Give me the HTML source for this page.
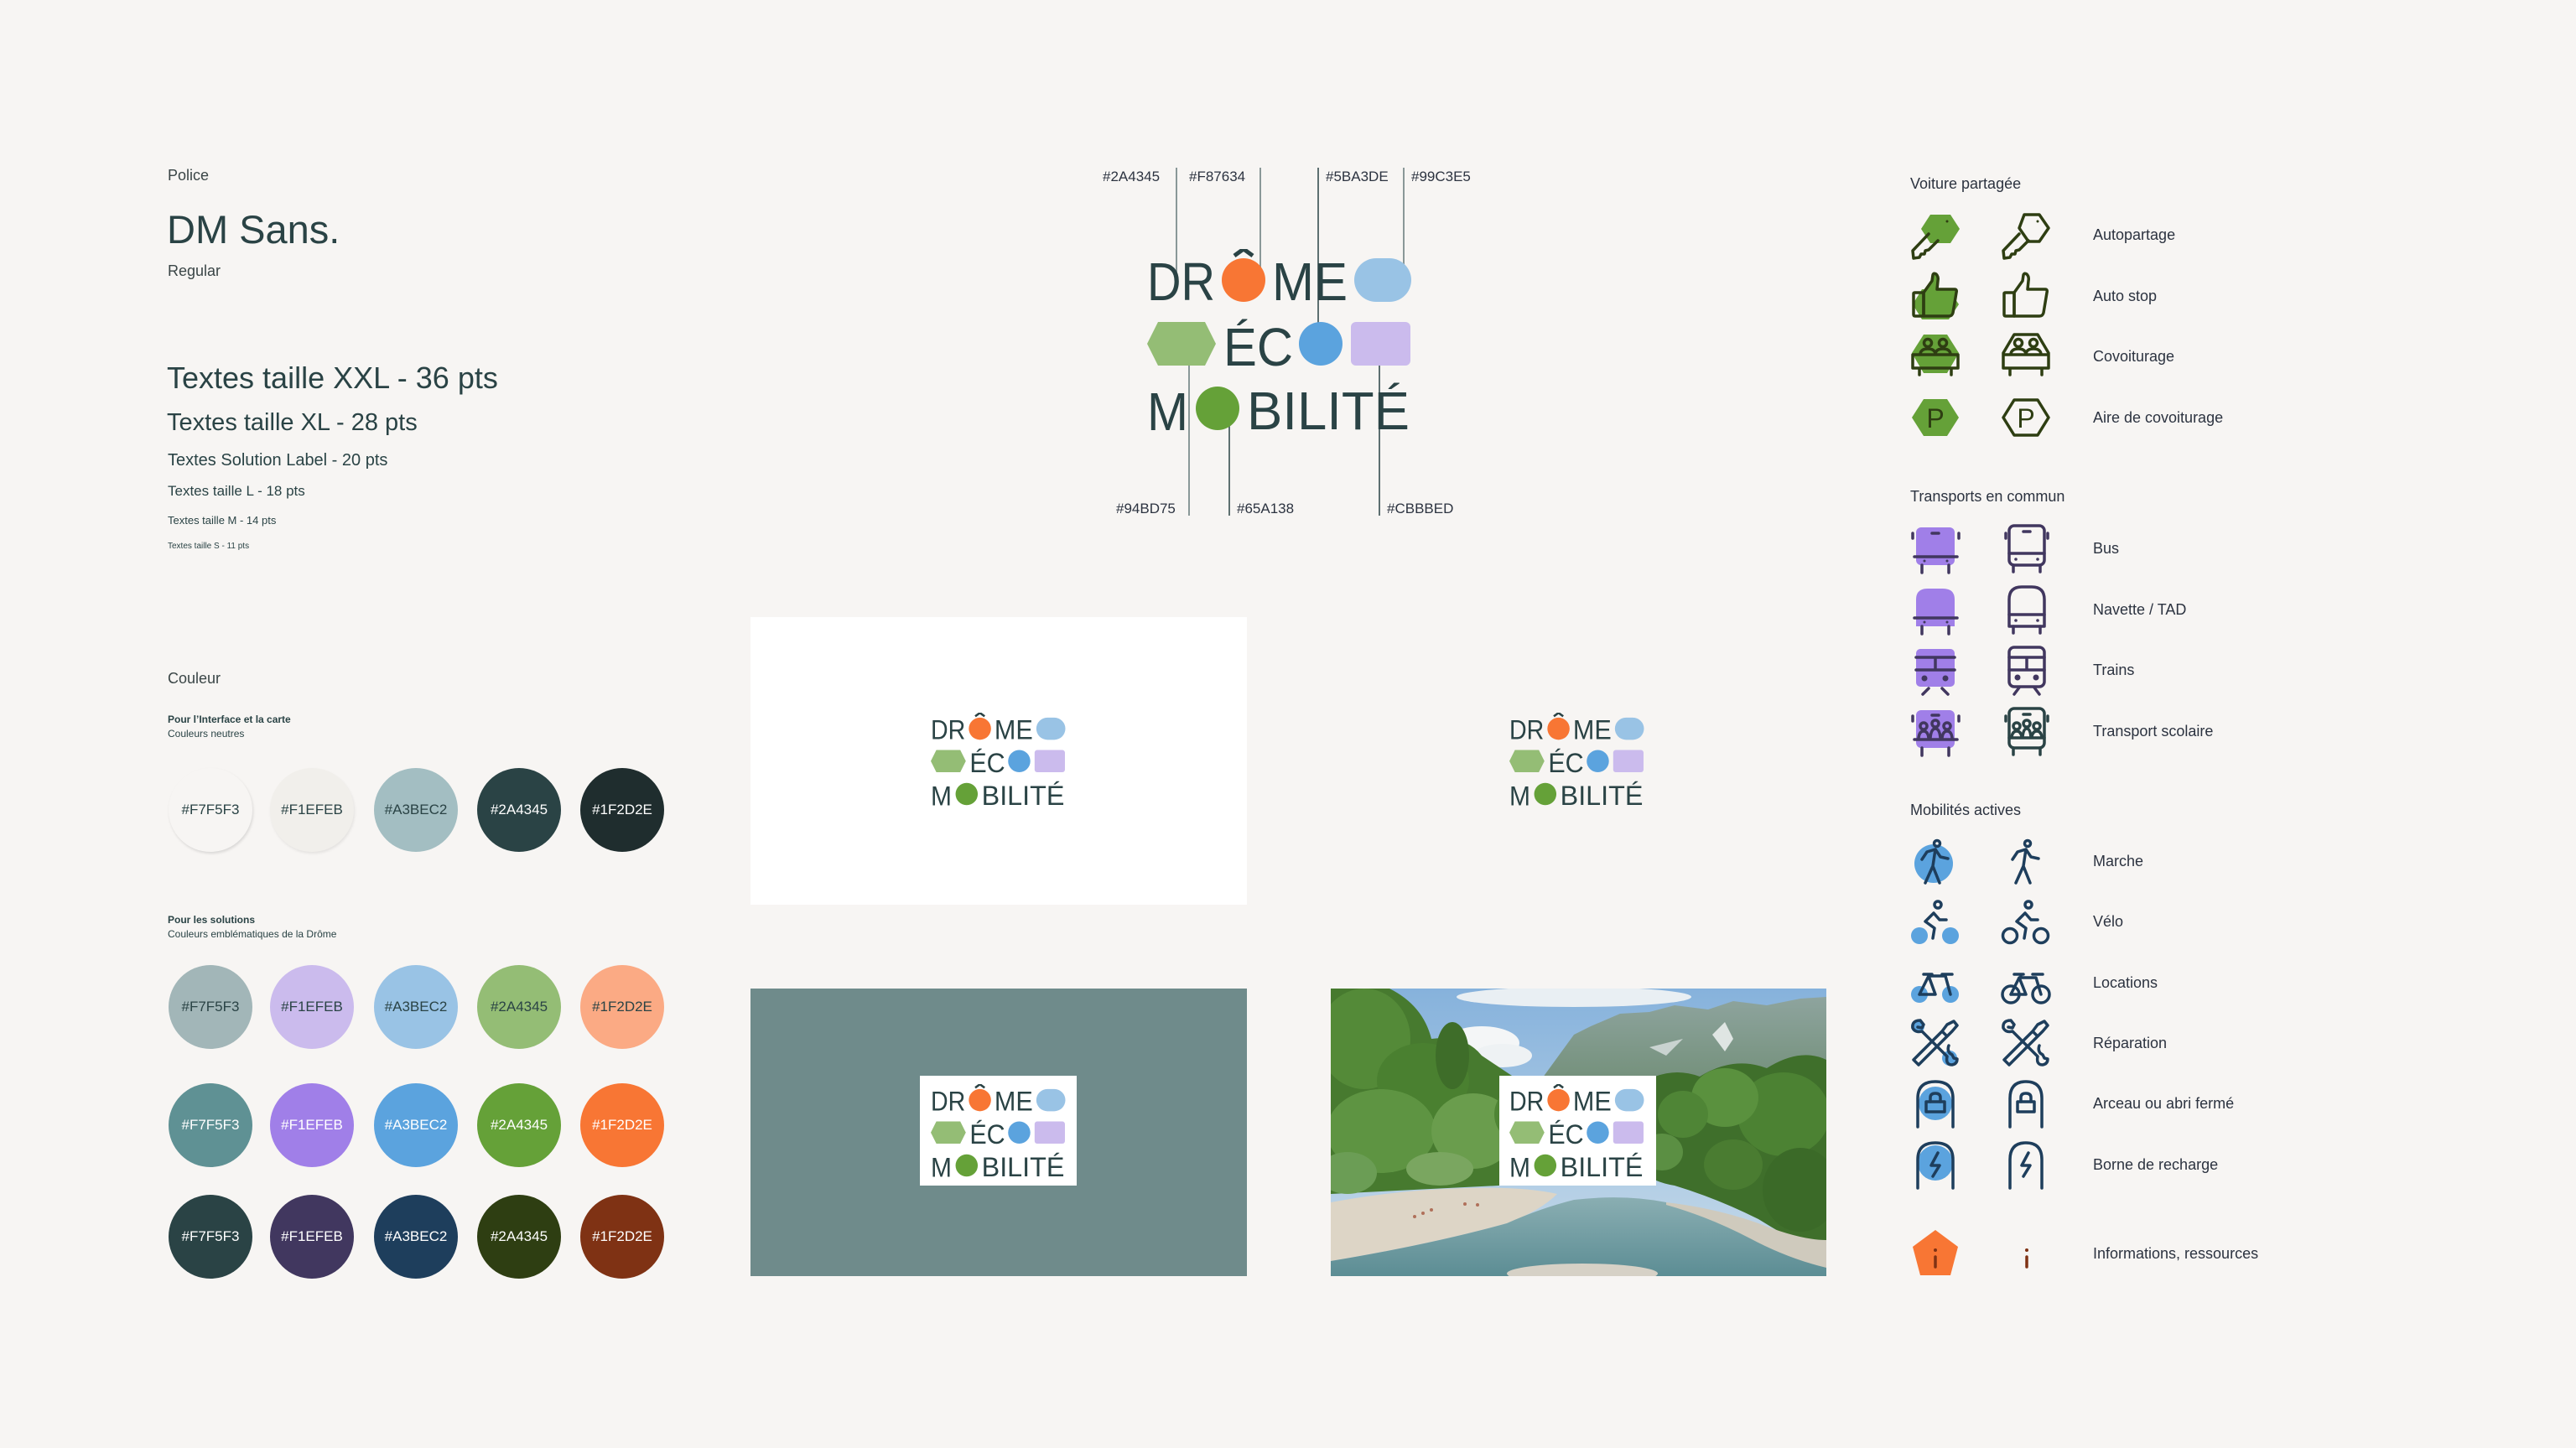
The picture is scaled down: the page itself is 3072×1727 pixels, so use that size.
<!DOCTYPE html>
<html><head><meta charset="utf-8">
<style>
html,body{margin:0;padding:0;background:#f7f5f3;}
body{width:3072px;height:1727px;position:relative;overflow:hidden;font-family:"Liberation Sans",sans-serif;color:#2a4345;}
.t{position:absolute;white-space:nowrap;line-height:1;}
.sw{position:absolute;width:100px;height:100px;border-radius:50%;display:flex;align-items:center;justify-content:center;font-size:17px;}
</style></head><body>

<div class="t" style="left:200px;top:200px;font-size:18px;color:#3a4546">Police</div>
<div class="t" style="left:199px;top:250px;font-size:47px;">DM Sans.</div>
<div class="t" style="left:200px;top:314px;font-size:18px;color:#3a4546">Regular</div>
<div class="t" style="left:199px;top:433px;font-size:36px;">Textes taille XXL - 36 pts</div>
<div class="t" style="left:199px;top:490px;font-size:29px;">Textes taille XL - 28 pts</div>
<div class="t" style="left:200px;top:539px;font-size:20px;">Textes Solution Label - 20 pts</div>
<div class="t" style="left:200px;top:577px;font-size:17px;">Textes taille L - 18 pts</div>
<div class="t" style="left:200px;top:614px;font-size:13px;">Textes taille M - 14 pts</div>
<div class="t" style="left:200px;top:647px;font-size:10px;">Textes taille S - 11 pts</div>

<div class="t" style="left:200px;top:800px;font-size:18px;color:#3a4546">Couleur</div>
<div class="t" style="left:200px;top:852px;font-size:12px;font-weight:bold;">Pour l’Interface et la carte</div>
<div class="t" style="left:200px;top:869px;font-size:12px;">Couleurs neutres</div>
<div class="t" style="left:200px;top:1091px;font-size:12px;font-weight:bold;">Pour les solutions</div>
<div class="t" style="left:200px;top:1108px;font-size:12px;">Couleurs emblématiques de la Drôme</div>

<div class="sw" style="left:201px;top:916px;background:#f7f5f3;box-shadow:1px 2px 3px rgba(0,0,0,.12);color:#2a4345">#F7F5F3</div>
<div class="sw" style="left:322px;top:916px;background:#f1efeb;box-shadow:1px 2px 3px rgba(0,0,0,.08);color:#2a4345">#F1EFEB</div>
<div class="sw" style="left:446px;top:916px;background:#a3bec2;color:#2a4345">#A3BEC2</div>
<div class="sw" style="left:569px;top:916px;background:#2a4345;color:#fff">#2A4345</div>
<div class="sw" style="left:692px;top:916px;background:#1f2d2e;color:#fff">#1F2D2E</div>
<div class="sw" style="left:201px;top:1151px;background:#a2b6b8;color:#2a4345">#F7F5F3</div>
<div class="sw" style="left:322px;top:1151px;background:#cbbbed;color:#2a4345">#F1EFEB</div>
<div class="sw" style="left:446px;top:1151px;background:#99c3e5;color:#2a4345">#A3BEC2</div>
<div class="sw" style="left:569px;top:1151px;background:#94bd75;color:#2a4345">#2A4345</div>
<div class="sw" style="left:692px;top:1151px;background:#fbaa84;color:#2a4345">#1F2D2E</div>
<div class="sw" style="left:201px;top:1292px;background:#5f9194;color:#fff">#F7F5F3</div>
<div class="sw" style="left:322px;top:1292px;background:#a07fe8;color:#fff">#F1EFEB</div>
<div class="sw" style="left:446px;top:1292px;background:#5ba3de;color:#fff">#A3BEC2</div>
<div class="sw" style="left:569px;top:1292px;background:#65a138;color:#fff">#2A4345</div>
<div class="sw" style="left:692px;top:1292px;background:#f87634;color:#fff">#1F2D2E</div>
<div class="sw" style="left:201px;top:1425px;background:#2a4345;color:#fff">#F7F5F3</div>
<div class="sw" style="left:322px;top:1425px;background:#41375f;color:#fff">#F1EFEB</div>
<div class="sw" style="left:446px;top:1425px;background:#1e3e5c;color:#fff">#A3BEC2</div>
<div class="sw" style="left:569px;top:1425px;background:#2e3e12;color:#fff">#2A4345</div>
<div class="sw" style="left:692px;top:1425px;background:#7f3214;color:#fff">#1F2D2E</div>

<div class="t" style="left:2278px;top:210px;font-size:18px;color:#2c3340">Voiture partagée</div>
<div class="t" style="left:2496px;top:271px;font-size:18px;color:#2c3340">Autopartage</div>
<div class="t" style="left:2496px;top:344px;font-size:18px;color:#2c3340">Auto stop</div>
<div class="t" style="left:2496px;top:416px;font-size:18px;color:#2c3340">Covoiturage</div>
<div class="t" style="left:2496px;top:489px;font-size:18px;color:#2c3340">Aire de covoiturage</div>
<div class="t" style="left:2278px;top:583px;font-size:18px;color:#2c3340">Transports en commun</div>
<div class="t" style="left:2496px;top:645px;font-size:18px;color:#2c3340">Bus</div>
<div class="t" style="left:2496px;top:718px;font-size:18px;color:#2c3340">Navette / TAD</div>
<div class="t" style="left:2496px;top:790px;font-size:18px;color:#2c3340">Trains</div>
<div class="t" style="left:2496px;top:863px;font-size:18px;color:#2c3340">Transport scolaire</div>
<div class="t" style="left:2278px;top:957px;font-size:18px;color:#2c3340">Mobilités actives</div>
<div class="t" style="left:2496px;top:1018px;font-size:18px;color:#2c3340">Marche</div>
<div class="t" style="left:2496px;top:1090px;font-size:18px;color:#2c3340">Vélo</div>
<div class="t" style="left:2496px;top:1163px;font-size:18px;color:#2c3340">Locations</div>
<div class="t" style="left:2496px;top:1235px;font-size:18px;color:#2c3340">Réparation</div>
<div class="t" style="left:2496px;top:1307px;font-size:18px;color:#2c3340">Arceau ou abri fermé</div>
<div class="t" style="left:2496px;top:1380px;font-size:18px;color:#2c3340">Borne de recharge</div>
<div class="t" style="left:2496px;top:1486px;font-size:18px;color:#2c3340">Informations, ressources</div>

<svg width="3072" height="1727" style="position:absolute;left:0;top:0" xmlns="http://www.w3.org/2000/svg" font-family="Liberation Sans, sans-serif">
<g font-size="17" fill="#2c3340">
<text x="1315" y="216">#2A4345</text>
<text x="1418" y="216">#F87634</text>
<text x="1581" y="216">#5BA3DE</text>
<text x="1683" y="216">#99C3E5</text>
<text x="1331" y="612">#94BD75</text>
<text x="1475" y="612">#65A138</text>
<text x="1654" y="612">#CBBBED</text>
</g>
<g stroke="#8a9898" stroke-width="2">
<line x1="1403" y1="200" x2="1403" y2="326"/>
<line x1="1503" y1="200" x2="1503" y2="326"/>
<line x1="1674" y1="200" x2="1674" y2="326"/>
<line x1="1418" y1="416" x2="1418" y2="615"/>
</g>
<g stroke="#2a4345" stroke-width="1.5">
<line x1="1572" y1="200" x2="1572" y2="400"/>
<line x1="1466" y1="487" x2="1466" y2="615"/>
<line x1="1645" y1="410" x2="1645" y2="615"/>
</g>

<svg x="1368" y="297" width="316" height="217" viewBox="0 0 316 217">
<g fill="#2a4345" font-size="64">
<text x="0" y="61" textLength="81" lengthAdjust="spacingAndGlyphs">DR</text>
<text x="149" y="61" textLength="90" lengthAdjust="spacingAndGlyphs">ME</text>
<text x="91" y="139" textLength="83" lengthAdjust="spacingAndGlyphs">ÉC</text>
<text x="0" y="216" textLength="49" lengthAdjust="spacingAndGlyphs">M</text>
<text x="119" y="215" textLength="194" lengthAdjust="spacingAndGlyphs">BILITÉ</text>
</g>
<circle cx="115" cy="37" r="26" fill="#f87634"/>
<polyline points="104,8 115,0 126,8" fill="none" stroke="#2a4345" stroke-width="5"/>
<rect x="247" y="11" width="68" height="52" rx="26" fill="#99c3e5"/>
<polygon points="13,87 69,87 82,113 69,139 13,139 0,113" fill="#94bd75"/>
<circle cx="207" cy="113" r="26" fill="#5ba3de"/>
<rect x="243" y="87" width="71" height="52" rx="6" fill="#cbbbed"/>
<circle cx="84" cy="190" r="26" fill="#65a138"/>
</svg>

<rect x="895" y="736" width="592" height="343" fill="#ffffff"/>
<rect x="895" y="1179" width="592" height="343" fill="#6f8b8b"/>
<rect x="1097" y="1283" width="187" height="131" fill="#ffffff"/>

<!-- photo -->
<svg x="1587" y="1179" width="591" height="343" viewBox="0 0 591 343">
<defs>
<linearGradient id="sky" x1="0" y1="0" x2="0" y2="1"><stop offset="0" stop-color="#86b2dc"/><stop offset="1" stop-color="#c9dcea"/></linearGradient>
<linearGradient id="wat" x1="0" y1="0" x2="0" y2="1"><stop offset="0" stop-color="#8aaeb2"/><stop offset="1" stop-color="#5c8d94"/></linearGradient>
<linearGradient id="mtn" x1="0" y1="0" x2="0" y2="1"><stop offset="0" stop-color="#8ea49e"/><stop offset="1" stop-color="#5d7f5c"/></linearGradient>
</defs>
<rect width="591" height="343" fill="url(#sky)"/>
<ellipse cx="290" cy="10" rx="140" ry="12" fill="#e9eff3"/>
<ellipse cx="180" cy="65" rx="45" ry="20" fill="#f4f6f7"/>
<ellipse cx="205" cy="80" rx="35" ry="14" fill="#eef2f4"/>
<polygon points="250,110 290,55 310,45 345,30 380,28 410,20 450,25 480,15 520,20 560,12 591,10 591,200 250,200" fill="url(#mtn)"/>
<polygon points="455,55 470,40 480,60 470,75" fill="#dfe5e3"/>
<polygon points="380,70 420,60 400,80" fill="#c9d3d0"/>
<!-- right trees -->
<path d="M360,120 Q400,90 440,105 Q480,80 520,95 Q560,70 591,85 V320 Q550,300 510,275 Q460,250 410,235 Q380,230 370,215 Z" fill="#3f6f2b"/>
<ellipse cx="540" cy="150" rx="55" ry="50" fill="#4c8233"/>
<ellipse cx="470" cy="130" rx="40" ry="35" fill="#5a913e"/>
<ellipse cx="420" cy="150" rx="30" ry="28" fill="#4f8536"/>
<ellipse cx="560" cy="240" rx="45" ry="50" fill="#3b6a28"/>
<ellipse cx="480" cy="210" rx="35" ry="30" fill="#4a7c31"/>
<ellipse cx="395" cy="195" rx="25" ry="22" fill="#5b8f43"/>
<!-- left trees -->
<path d="M0,0 H70 Q110,20 120,60 Q160,55 180,80 Q210,100 240,120 Q270,140 260,200 Q240,230 200,235 L0,245 Z" fill="#477a2f"/>
<ellipse cx="40" cy="60" rx="55" ry="60" fill="#548a38"/>
<ellipse cx="110" cy="110" rx="55" ry="45" fill="#4a8030"/>
<ellipse cx="60" cy="170" rx="65" ry="50" fill="#5e9442"/>
<ellipse cx="170" cy="170" rx="50" ry="45" fill="#6a9d4d"/>
<ellipse cx="230" cy="150" rx="35" ry="35" fill="#4f8535"/>
<ellipse cx="145" cy="80" rx="20" ry="40" fill="#3e6d29"/>
<ellipse cx="20" cy="220" rx="35" ry="25" fill="#6b9d55"/>
<ellipse cx="130" cy="215" rx="40" ry="20" fill="#7aa660"/>
<!-- sand -->
<path d="M0,255 Q80,240 160,238 Q230,236 270,245 Q250,265 210,280 Q120,305 0,325 Z" fill="#ddd5c6"/>
<!-- water -->
<path d="M0,325 Q120,305 210,280 Q250,262 290,252 Q350,245 400,255 Q450,270 500,295 Q545,320 591,330 V343 H0 Z" fill="url(#wat)"/>
<!-- right rocks -->
<path d="M400,255 Q460,262 510,280 Q560,300 591,300 V333 Q545,322 500,298 Q450,272 400,258 Z" fill="#cfcabd"/>
<ellipse cx="300" cy="340" rx="90" ry="12" fill="#d6d1c6"/>
<g fill="#b0705a"><circle cx="110" cy="268" r="2"/><circle cx="120" cy="264" r="2"/><circle cx="100" cy="272" r="2"/><circle cx="160" cy="257" r="2"/><circle cx="175" cy="258" r="2"/></g>
</svg>
<rect x="1788" y="1283" width="187" height="131" fill="#ffffff"/>

<svg x="1110" y="850" width="161" height="111" viewBox="0 0 316 217">
<g fill="#2a4345" font-size="64"><text x="0" y="61" textLength="81" lengthAdjust="spacingAndGlyphs">DR</text><text x="149" y="61" textLength="90" lengthAdjust="spacingAndGlyphs">ME</text><text x="91" y="139" textLength="83" lengthAdjust="spacingAndGlyphs">ÉC</text><text x="0" y="216" textLength="49" lengthAdjust="spacingAndGlyphs">M</text><text x="119" y="215" textLength="194" lengthAdjust="spacingAndGlyphs">BILITÉ</text></g>
<circle cx="115" cy="37" r="26" fill="#f87634"/><polyline points="104,8 115,0 126,8" fill="none" stroke="#2a4345" stroke-width="5"/><rect x="247" y="11" width="68" height="52" rx="26" fill="#99c3e5"/><polygon points="13,87 69,87 82,113 69,139 13,139 0,113" fill="#94bd75"/><circle cx="207" cy="113" r="26" fill="#5ba3de"/><rect x="243" y="87" width="71" height="52" rx="6" fill="#cbbbed"/><circle cx="84" cy="190" r="26" fill="#65a138"/>
</svg>
<svg x="1800" y="850" width="161" height="111" viewBox="0 0 316 217">
<g fill="#2a4345" font-size="64"><text x="0" y="61" textLength="81" lengthAdjust="spacingAndGlyphs">DR</text><text x="149" y="61" textLength="90" lengthAdjust="spacingAndGlyphs">ME</text><text x="91" y="139" textLength="83" lengthAdjust="spacingAndGlyphs">ÉC</text><text x="0" y="216" textLength="49" lengthAdjust="spacingAndGlyphs">M</text><text x="119" y="215" textLength="194" lengthAdjust="spacingAndGlyphs">BILITÉ</text></g>
<circle cx="115" cy="37" r="26" fill="#f87634"/><polyline points="104,8 115,0 126,8" fill="none" stroke="#2a4345" stroke-width="5"/><rect x="247" y="11" width="68" height="52" rx="26" fill="#99c3e5"/><polygon points="13,87 69,87 82,113 69,139 13,139 0,113" fill="#94bd75"/><circle cx="207" cy="113" r="26" fill="#5ba3de"/><rect x="243" y="87" width="71" height="52" rx="6" fill="#cbbbed"/><circle cx="84" cy="190" r="26" fill="#65a138"/>
</svg>
<svg x="1110" y="1293" width="161" height="111" viewBox="0 0 316 217">
<g fill="#2a4345" font-size="64"><text x="0" y="61" textLength="81" lengthAdjust="spacingAndGlyphs">DR</text><text x="149" y="61" textLength="90" lengthAdjust="spacingAndGlyphs">ME</text><text x="91" y="139" textLength="83" lengthAdjust="spacingAndGlyphs">ÉC</text><text x="0" y="216" textLength="49" lengthAdjust="spacingAndGlyphs">M</text><text x="119" y="215" textLength="194" lengthAdjust="spacingAndGlyphs">BILITÉ</text></g>
<circle cx="115" cy="37" r="26" fill="#f87634"/><polyline points="104,8 115,0 126,8" fill="none" stroke="#2a4345" stroke-width="5"/><rect x="247" y="11" width="68" height="52" rx="26" fill="#99c3e5"/><polygon points="13,87 69,87 82,113 69,139 13,139 0,113" fill="#94bd75"/><circle cx="207" cy="113" r="26" fill="#5ba3de"/><rect x="243" y="87" width="71" height="52" rx="6" fill="#cbbbed"/><circle cx="84" cy="190" r="26" fill="#65a138"/>
</svg>
<svg x="1800" y="1293" width="161" height="111" viewBox="0 0 316 217">
<g fill="#2a4345" font-size="64"><text x="0" y="61" textLength="81" lengthAdjust="spacingAndGlyphs">DR</text><text x="149" y="61" textLength="90" lengthAdjust="spacingAndGlyphs">ME</text><text x="91" y="139" textLength="83" lengthAdjust="spacingAndGlyphs">ÉC</text><text x="0" y="216" textLength="49" lengthAdjust="spacingAndGlyphs">M</text><text x="119" y="215" textLength="194" lengthAdjust="spacingAndGlyphs">BILITÉ</text></g>
<circle cx="115" cy="37" r="26" fill="#f87634"/><polyline points="104,8 115,0 126,8" fill="none" stroke="#2a4345" stroke-width="5"/><rect x="247" y="11" width="68" height="52" rx="26" fill="#99c3e5"/><polygon points="13,87 69,87 82,113 69,139 13,139 0,113" fill="#94bd75"/><circle cx="207" cy="113" r="26" fill="#5ba3de"/><rect x="243" y="87" width="71" height="52" rx="6" fill="#cbbbed"/><circle cx="84" cy="190" r="26" fill="#65a138"/>
</svg>

<g fill="none" stroke="#2e3e12" stroke-width="3.5" stroke-linecap="round" stroke-linejoin="round">
 <g transform="translate(2278,253)">
  <polygon points="24,3 48,3 59,20 48,37 24,37 13,20" fill="#65a138" stroke="none"/>
  <path d="M22,26 L3,46 L4,55 L11,54 L13,50 L17,50 L18,46 L22,45 L33,34"/>
  <circle cx="44" cy="11" r="1.5" fill="#2e3e12" stroke="none"/>
 </g>
 <g transform="translate(2386,253)">
  <polygon points="28,3 46,3 57,19 46,35 33,35 22,19"/>
  <path d="M22,26 L3,46 L4,55 L11,54 L13,50 L17,50 L18,46 L22,45 L33,34"/>
  <circle cx="44" cy="11" r="1.5" fill="#2e3e12" stroke="none"/>
 </g>
 <g transform="translate(2278,323)">
  <polygon points="14,22 46,22 58,40 46,58 14,58 3,40" fill="#65a138" stroke="none"/>
  <path d="M16,26 L26,12 L27,5 Q28,2 31,4 Q34,7 33,12 L32,22 H53 Q56,22 55,26 L51,50 Q50,54 46,54 H16 Z" fill="#65a138"/>
  <path d="M4,27 Q4,26 6,26 H16 V54 H6 Q4,54 4,52 Z"/>
 </g>
 <g transform="translate(2386,323)">
  <path d="M16,26 L26,12 L27,5 Q28,2 31,4 Q34,7 33,12 L32,22 H53 Q56,22 55,26 L51,50 Q50,54 46,54 H16 Z"/>
  <path d="M4,27 Q4,26 6,26 H16 V54 H6 Q4,54 4,52 Z"/>
 </g>
 <g transform="translate(2278,395)">
  <polygon points="16,4 44,4 58,26 44,50 16,50 2,26" fill="#65a138" stroke="none"/>
  <path d="M3,28 H57 V44 H3 Z M11,44 V52 M49,44 V52"/>
  <circle cx="21" cy="14" r="4.5"/><circle cx="39" cy="14" r="4.5"/>
  <path d="M12,27 Q13,21 21,21 Q29,21 30,27 M30,27 Q31,21 39,21 Q47,21 48,27"/>
 </g>
 <g transform="translate(2386,395)">
  <path d="M3,26 L16,4 H44 L57,26 V44 H3 Z M3,28 H57 M11,44 V52 M49,44 V52"/>
  <circle cx="21" cy="14" r="4.5"/><circle cx="39" cy="14" r="4.5"/>
  <path d="M12,27 Q13,21 21,21 Q29,21 30,27 M30,27 Q31,21 39,21 Q47,21 48,27"/>
 </g>
 <g transform="translate(2278,468)">
  <polygon points="16,8 44,8 58,30 44,52 16,52 2,30" fill="#65a138" stroke="none"/>
  <text x="30" y="42" font-size="32" text-anchor="middle" fill="#2e3e12" stroke="none">P</text>
 </g>
 <g transform="translate(2386,468)">
  <polygon points="16,9 44,9 57,30 44,51 16,51 3,30"/>
  <text x="30" y="42" font-size="32" text-anchor="middle" fill="#2e3e12" stroke="none">P</text>
 </g>
</g>

<g fill="none" stroke="#41375f" stroke-width="3.5" stroke-linecap="round" stroke-linejoin="round">
 <g transform="translate(2279,624)">
  <rect x="6" y="5" width="46" height="45" rx="6" fill="#a07fe8" stroke="none"/>
  <path d="M4,40 H55 M25,12 H33 M2,12 V18 M57,12 V18 M13,50 V59 M45,50 V59"/>
  <circle cx="16" cy="45" r="1.5" fill="#41375f" stroke="none"/><circle cx="43" cy="45" r="1.5" fill="#41375f" stroke="none"/>
 </g>
 <g transform="translate(2387,624)">
  <rect x="9" y="3" width="42" height="47" rx="6"/>
  <path d="M9,36 H51 M26,10 H34 M5,12 V18 M55,12 V18 M14,50 V58 M46,50 V58"/>
  <circle cx="17" cy="43" r="1.8" fill="#41375f" stroke="none"/><circle cx="43" cy="43" r="1.8" fill="#41375f" stroke="none"/>
 </g>
 <g transform="translate(2279,697)">
  <path d="M6,50 V18 Q6,5 20,5 H38 Q52,5 52,18 V50 Z" fill="#a07fe8" stroke="none"/>
  <path d="M4,40 H55 M13,50 V59 M45,50 V59"/>
  <circle cx="16" cy="45" r="1.5" fill="#41375f" stroke="none"/><circle cx="43" cy="45" r="1.5" fill="#41375f" stroke="none"/>
 </g>
 <g transform="translate(2387,697)">
  <path d="M9,50 V18 Q9,3 24,3 H36 Q51,3 51,18 V50 Z"/>
  <path d="M9,36 H51 M14,50 V58 M46,50 V58"/>
  <circle cx="17" cy="43" r="1.8" fill="#41375f" stroke="none"/><circle cx="43" cy="43" r="1.8" fill="#41375f" stroke="none"/>
 </g>
 <g transform="translate(2279,769)">
  <rect x="6" y="5" width="46" height="45" rx="5" fill="#a07fe8" stroke="none"/>
  <path d="M6,15 H52 M6,30 H52 M29,15 V30 M14,59 L21,52 M44,59 L37,52"/>
  <circle cx="16" cy="40" r="3.5" fill="#41375f" stroke="none"/><circle cx="41" cy="40" r="3.5" fill="#41375f" stroke="none"/>
 </g>
 <g transform="translate(2387,769)">
  <rect x="9" y="3" width="42" height="47" rx="6"/>
  <path d="M9,15 H51 M9,30 H51 M30,15 V30 M15,59 L21,51 M45,59 L39,51"/>
  <circle cx="19" cy="39" r="3.5" fill="#41375f" stroke="none"/><circle cx="41" cy="39" r="3.5" fill="#41375f" stroke="none"/>
 </g>
 <g transform="translate(2279,842)">
  <rect x="6" y="5" width="46" height="45" rx="6" fill="#a07fe8" stroke="none"/>
  <path d="M4,40 H55 M25,11 H33 M2,12 V18 M57,12 V18 M13,50 V59 M45,50 V59"/>
  <circle cx="15" cy="24" r="4"/><circle cx="29" cy="21" r="4"/><circle cx="43" cy="24" r="4"/>
  <path d="M9,38 Q10,30 15,30 Q20,30 21,38 M23,38 Q24,27 29,27 Q34,27 35,38 M37,38 Q38,30 43,30 Q48,30 49,38"/>
 </g>
 <g transform="translate(2387,842)" stroke="#2a4345">
  <rect x="9" y="3" width="42" height="47" rx="6"/>
  <path d="M9,38 H51 M26,10 H34 M5,12 V18 M55,12 V18 M14,50 V58 M46,50 V58"/>
  <circle cx="18" cy="24" r="4"/><circle cx="30" cy="21" r="4"/><circle cx="42" cy="24" r="4"/>
  <path d="M12,37 Q13,30 18,30 Q23,30 24,37 M25,37 Q26,27 30,27 Q34,27 35,37 M36,37 Q37,30 42,30 Q47,30 48,37"/>
 </g>
</g>

<g fill="none" stroke="#1e3e5c" stroke-width="3.5" stroke-linecap="round" stroke-linejoin="round">
 <g transform="translate(2278,997)">
  <circle cx="28" cy="33" r="23" fill="#5ba3de" stroke="none"/>
  <circle cx="32" cy="9" r="3.5"/>
  <path d="M30,16 L27,36 L18,56 M27,36 L35,56 M14,28 L20,19 L30,16 L36,25 L45,27"/>
 </g>
 <g transform="translate(2386,997)">
  <circle cx="32" cy="9" r="3.5"/>
  <path d="M30,16 L27,36 L18,56 M27,36 L35,56 M14,28 L20,19 L30,16 L36,25 L45,27"/>
 </g>
 <g transform="translate(2278,1069)">
  <circle cx="33" cy="10" r="4"/>
  <circle cx="11" cy="47" r="10" fill="#5ba3de" stroke="none"/><circle cx="48" cy="47" r="10" fill="#5ba3de" stroke="none"/>
  <path d="M43,28 H35 L28,20 L18,30 L29,38 L27,50"/>
 </g>
 <g transform="translate(2386,1069)">
  <circle cx="33" cy="10" r="4"/>
  <circle cx="11" cy="47" r="8.5"/><circle cx="48" cy="47" r="8.5"/>
  <path d="M44,28 H36 L29,20 L19,30 L30,38 L28,50"/>
 </g>
 <g transform="translate(2278,1142)">
  <circle cx="11" cy="44" r="10" fill="#5ba3de" stroke="none"/><circle cx="48" cy="44" r="10" fill="#5ba3de" stroke="none"/>
  <path d="M11,44 L22,22 L42,22 L48,44 M22,22 L30,44 L11,44 M16,20 H26 M38,20 H50"/>
 </g>
 <g transform="translate(2386,1142)">
  <circle cx="12" cy="44" r="10"/><circle cx="48" cy="44" r="10"/>
  <path d="M12,44 L22,24 L42,24 L48,44 M22,24 L30,44 L12,44 M16,20 H27 M38,20 H50 M24,20 V24"/>
 </g>
 <g transform="translate(2278,1214)">
  <circle cx="9" cy="10" r="8" fill="#5ba3de" stroke="none"/><circle cx="47" cy="48" r="9" fill="#5ba3de" stroke="none"/>
  <path d="M4,50 L38,16 L44,22 L10,56 Z M38,16 L44,8 L52,4 L56,9 L50,16 L44,22"/>
  <path d="M12,3 Q2,3 3,12 Q6,18 14,16 L44,46 Q42,56 50,56 Q56,55 56,49 L52,48 L50,44 L47,42 Q44,38 46,33 M12,3 L16,8 L14,12 L9,11"/>
 </g>
 <g transform="translate(2386,1214)">
  <path d="M4,50 L38,16 L44,22 L10,56 Z M38,16 L44,8 L52,4 L56,9 L50,16 L44,22"/>
  <path d="M12,3 Q2,3 3,12 Q6,18 14,16 L44,46 Q42,56 50,56 Q56,55 56,49 L52,48 L50,44 L47,42 Q44,38 46,33 M12,3 L16,8 L14,12 L9,11"/>
 </g>
 <g transform="translate(2278,1286)">
  <circle cx="30" cy="30" r="20" fill="#5ba3de" stroke="none"/>
  <path d="M9,58 V24 Q9,4 30,4 Q51,4 51,24 V58"/>
  <rect x="19" y="28" width="22" height="12"/><path d="M24,28 V23 Q24,18 30,18 Q36,18 36,23 V28"/>
 </g>
 <g transform="translate(2386,1286)">
  <path d="M11,58 V24 Q11,4 30,4 Q49,4 49,24 V58"/>
  <rect x="20" y="28" width="20" height="12"/><path d="M24,28 V23 Q24,18 30,18 Q36,18 36,23 V28"/>
 </g>
 <g transform="translate(2278,1359)">
  <circle cx="30" cy="28" r="21" fill="#5ba3de" stroke="none"/>
  <path d="M9,58 V24 Q9,4 30,4 Q51,4 51,24 V58"/>
  <path d="M33,16 L25,31 H35 L27,44"/>
 </g>
 <g transform="translate(2386,1359)">
  <path d="M11,58 V24 Q11,4 30,4 Q49,4 49,24 V58"/>
  <path d="M33,16 L25,31 H35 L27,44"/>
 </g>
 <g transform="translate(2278,1465)">
  <polygon points="30,2 57,22 48,56 12,56 3,22" fill="#f87634" stroke="none"/>
  <circle cx="30" cy="26" r="2" fill="#7f3214" stroke="none"/>
  <path d="M30,34 V46" stroke="#7f3214"/>
 </g>
 <g transform="translate(2386,1465)">
  <circle cx="31" cy="26" r="2" fill="#7f3214" stroke="none"/>
  <path d="M31,34 V46" stroke="#7f3214"/>
 </g>
</g>
</svg>
</body></html>
